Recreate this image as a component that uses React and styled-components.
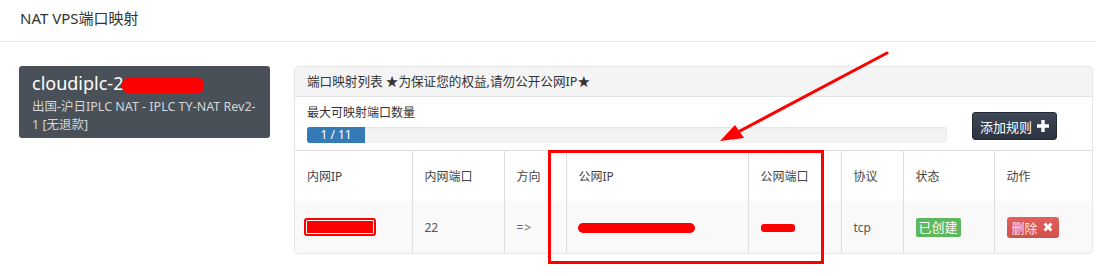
import React from "react";
import styled, { createGlobalStyle } from "styled-components";

const Global = createGlobalStyle`
  html, body { margin: 0; padding: 0; background: #fff; }
  body {
    font-family: "Noto Sans", "Noto Sans CJK SC", sans-serif;
    color: #333;
    width: 1096px;
    height: 276px;
    overflow: hidden;
  }
`;

const Page = styled.div`
  position: relative;
  width: 1096px;
  height: 276px;
`;

const TopBar = styled.div`
  height: 42px;
  border-bottom: 1px solid #e8e8ee;
  padding: 8px 0 0 20px;
  box-sizing: border-box;
  font-size: 15px;
  line-height: 20px;
  color: #333;
`;

const Content = styled.div`
  display: flex;
  align-items: flex-start;
  padding: 24px 0 0 19px;
  gap: 24px;
`;

const Card = styled.div`
  width: 251px;
  box-sizing: border-box;
  background: #495057;
  border-radius: 3px;
  padding: 6px 10px 4px 13px;
  color: #fff;
`;

const CardTitle = styled.div`
  font-size: 18px;
  line-height: 22px;
  white-space: nowrap;
`;

const CardSub = styled.div`
  margin-top: 4px;
  font-size: 12.5px;
  line-height: 18px;
  color: #d4d6d8;
`;

const Panel = styled.div`
  width: 799px;
  box-sizing: border-box;
  border: 1px solid #e6e6e6;
  border-radius: 4px;
  overflow: hidden;
`;

const PanelHead = styled.div`
  height: 29px;
  background: #f4f4f4;
  border-bottom: 1px solid #e3e3e3;
  padding: 0 12px;
  font-size: 12.6px;
  line-height: 29px;
  color: #333;
`;

const PanelBody = styled.div`
  display: flex;
  align-items: flex-start;
  height: 53px;
  padding: 0 12px;
  border-bottom: 1px solid #dedede;
`;

const Quota = styled.div`
  width: 640px;
  padding-top: 8px;
`;

const QuotaLabel = styled.div`
  font-size: 12px;
  line-height: 16px;
  color: #333;
`;

const Track = styled.div`
  margin-top: 6px;
  height: 16px;
  background: #f3f3f3;
  border-radius: 3px;
  box-shadow: inset 0 1px 2px rgba(0, 0, 0, 0.08);
  overflow: hidden;
`;

const Fill = styled.div`
  height: 100%;
  background: #337ab7;
  color: #fff;
  font-size: 12px;
  line-height: 16px;
  text-align: center;
`;

const AddButton = styled.button`
  margin: 15px 0 0 25px;
  width: 85px;
  height: 28px;
  border: 1px solid #222a35;
  border-radius: 3px;
  background: linear-gradient(#3f4858, #2c3441);
  color: #fff;
  font-family: inherit;
  font-size: 13px;
  padding: 0;
  display: flex;
  align-items: center;
  justify-content: center;
  gap: 5px;
`;

const Table = styled.table`
  width: 100%;
  border-collapse: collapse;
  table-layout: fixed;
  font-size: 12px;
`;

const Th = styled.th`
  height: 50px;
  padding: 0 12px;
  text-align: left;
  font-weight: normal;
  color: #444;
  border-left: 1px solid #dedede;
  &:first-child { border-left: none; }
`;

const Td = styled.td`
  height: 52px;
  padding: 0 12px;
  background: #f9f9f9;
  color: #555;
  border-left: 1px solid #dedede;
  &:first-child { border-left: none; }
`;

const Arrow = styled.span`
  color: #666;
  letter-spacing: 1px;
`;

const Badge = styled.span`
  display: inline-block;
  background: #5cb85c;
  color: #fff;
  font-size: 13px;
  line-height: 19px;
  padding: 0 3px;
  border-radius: 2px;
`;

const DeleteButton = styled.span`
  display: inline-flex;
  align-items: center;
  gap: 4px;
  height: 21px;
  padding: 0 5px;
  background: linear-gradient(#e0605b, #d2504a);
  border-radius: 3px;
  color: #fde3e8;
  font-size: 13px;
`;

/* red redaction marks that cover private data in the screenshot */
const Redact = styled.span`
  display: inline-block;
  vertical-align: middle;
  background: #ff0000;
  width: ${(p) => p.$w}px;
  height: ${(p) => p.$h}px;
  border-radius: ${(p) => p.$r || 4}px;
  margin-left: ${(p) => p.$ml || 0}px;
`;

const FramedRedact = styled(Redact)`
  box-sizing: border-box;
  border: 2px solid #ff0000;
  box-shadow: inset 0 0 0 1px #fff;
  margin-left: -3px;
`;

const Annotations = styled.svg`
  position: absolute;
  left: 0;
  top: 0;
  pointer-events: none;
`;

const Plus = () => (
  <svg width="12" height="12" viewBox="0 0 12 12">
    <path d="M4.3 0h3.4v4.3H12v3.4H7.7V12H4.3V7.7H0V4.3h4.3z" fill="#fff" />
  </svg>
);

const Cross = () => (
  <svg width="12" height="12" viewBox="0 0 11 11">
    <path d="M1.4 3.3L3.3 1.4 5.5 3.6 7.7 1.4 9.6 3.3 7.4 5.5 9.6 7.7 7.7 9.6 5.5 7.4 3.3 9.6 1.4 7.7 3.6 5.5z" fill="#fff" />
  </svg>
);

const columns = [
  ["内网IP", 117],
  ["内网端口", 92],
  ["方向", 62],
  ["公网IP", 182],
  ["公网端口", 93],
  ["协议", 62],
  ["状态", 91],
  ["动作", 98],
];

export default function App() {
  return (
    <Page>
      <Global />
      <TopBar>NAT VPS端口映射</TopBar>
      <Content>
        <Card>
          <CardTitle>
            cloudiplc-2<Redact $w={82} $h={15} $r={6} $ml={-1} />
          </CardTitle>
          <CardSub>
            出国-沪日IPLC NAT - IPLC TY-NAT Rev2-
            <br />1 [无退款]
          </CardSub>
        </Card>
        <Panel>
          <PanelHead>端口映射列表 ★为保证您的权益,请勿公开公网IP★</PanelHead>
          <PanelBody>
            <Quota>
              <QuotaLabel>最大可映射端口数量</QuotaLabel>
              <Track>
                <Fill style={{ width: `${(1 / 11) * 100}%` }}>1 / 11</Fill>
              </Track>
            </Quota>
            <AddButton>
              添加规则 <Plus />
            </AddButton>
          </PanelBody>
          <Table>
            <colgroup>
              {columns.map(([k, w]) => (
                <col key={k} style={{ width: w }} />
              ))}
            </colgroup>
            <thead>
              <tr>
                {columns.map(([k]) => (
                  <Th key={k}>{k}</Th>
                ))}
              </tr>
            </thead>
            <tbody>
              <tr>
                <Td>
                  <FramedRedact $w={72} $h={18} $r={3} />
                </Td>
                <Td>22</Td>
                <Td>
                  <Arrow>=&gt;</Arrow>
                </Td>
                <Td>
                  <Redact $w={117} $h={10} $r={5} $ml={-1} />
                </Td>
                <Td>
                  <Redact $w={34} $h={8} $r={3} />
                </Td>
                <Td>tcp</Td>
                <Td>
                  <Badge>已创建</Badge>
                </Td>
                <Td>
                  <DeleteButton>
                    删除 <Cross />
                  </DeleteButton>
                </Td>
              </tr>
            </tbody>
          </Table>
        </Panel>
      </Content>

      <Annotations width="1096" height="276" viewBox="0 0 1096 276">
        <rect x="549.5" y="151.5" width="273" height="111" fill="none" stroke="#ff0000" strokeWidth="3" />
        <line x1="887" y1="53" x2="738" y2="132" stroke="#ff0000" strokeWidth="3" strokeLinecap="round" />
        <polygon points="720,141 735,125 744,138" fill="#ff0000" />
      </Annotations>
    </Page>
  );
}
